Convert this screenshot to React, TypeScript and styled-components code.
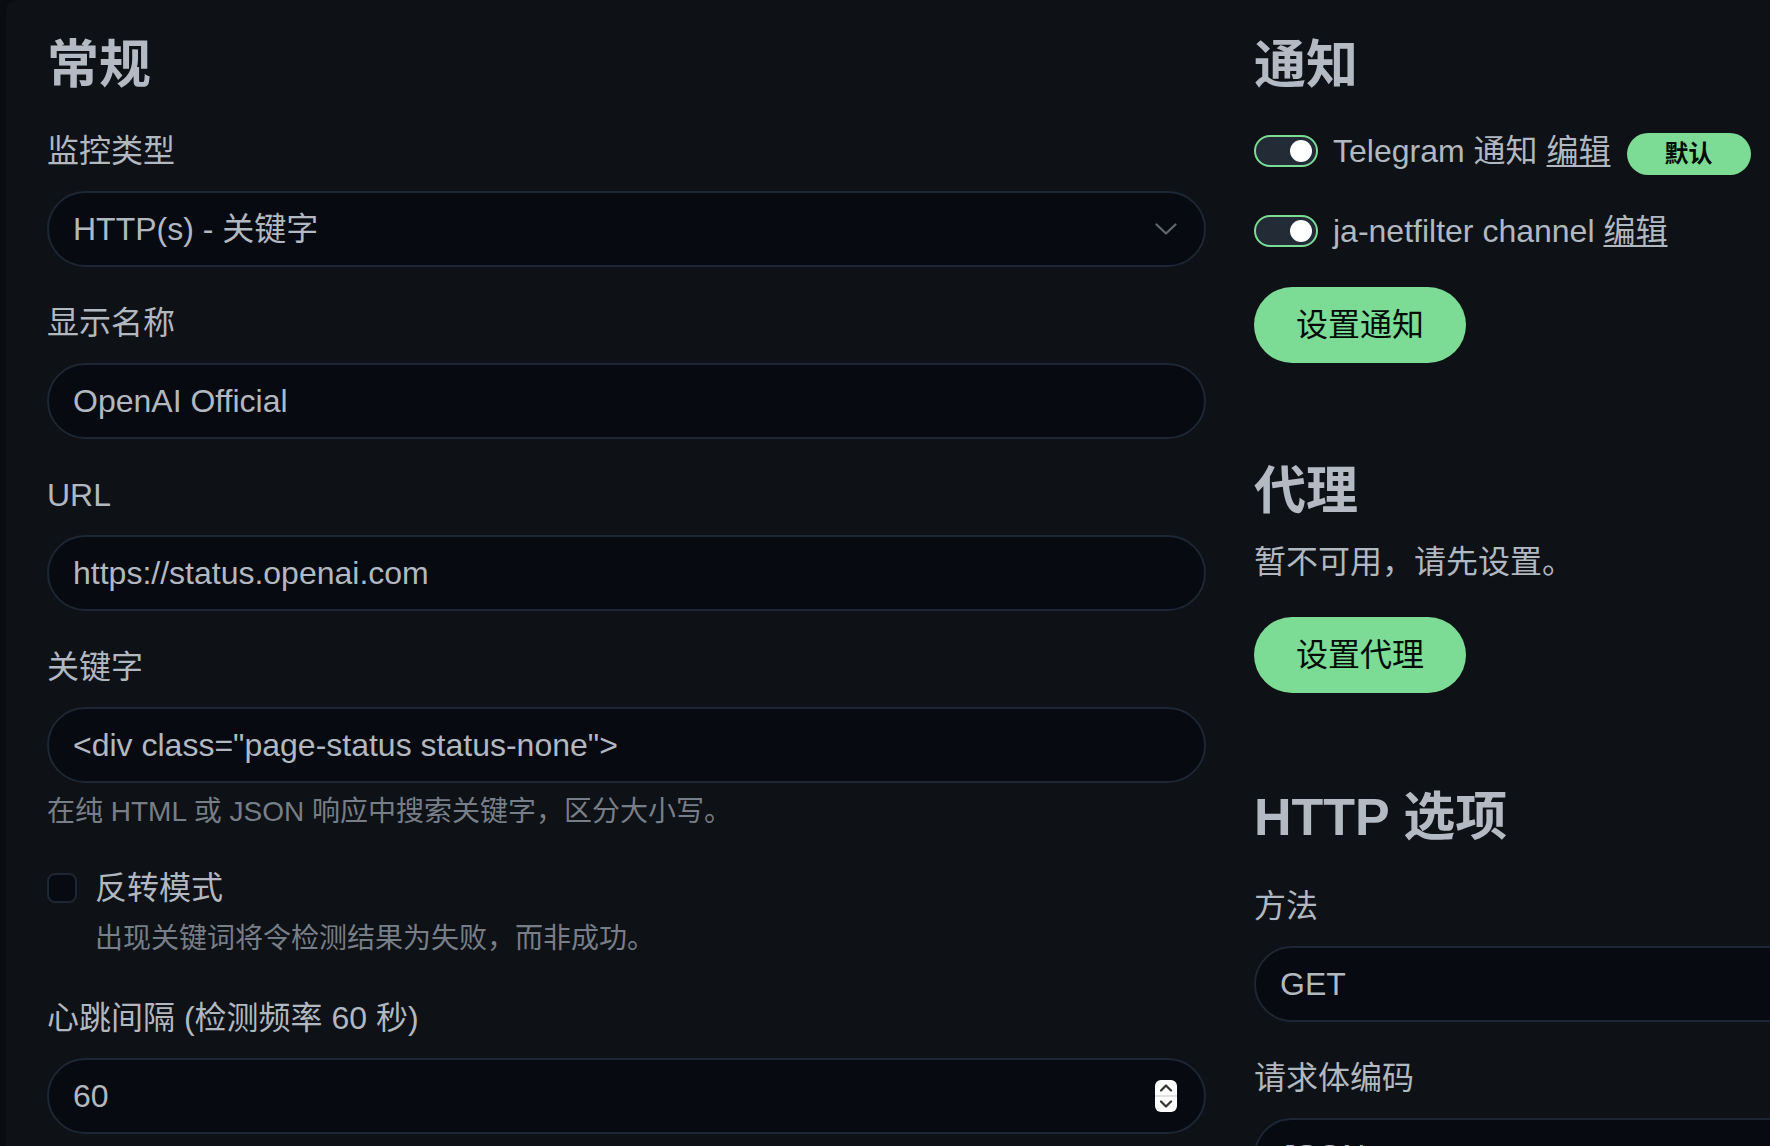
import React from "react";
import styled, { createGlobalStyle } from "styled-components";

const GlobalStyle = createGlobalStyle`
  html, body {
    margin: 0;
    padding: 0;
    background: #090c10;
    overflow: hidden;
  }
  body {
    font-family: "Liberation Sans", "Noto Sans CJK SC", sans-serif;
  }
  #root {
    width: 1770px;
    height: 1146px;
    overflow: hidden;
  }
`;

const GREEN = "#7cdb94";
const FONT = `"Liberation Sans", "Noto Sans CJK SC", sans-serif`;

const Card = styled.div`
  margin-left: 6px;
  width: 2460px;
  height: 1146px;
  box-sizing: border-box;
  padding: 35px 41px 0;
  background: #0e1116;
  border-top-left-radius: 10px;
  color: #b1b8c0;
  font-family: ${FONT};
`;

const Columns = styled.div`
  display: grid;
  grid-template-columns: 1159px 1159px;
  column-gap: 48px;
  align-items: start;
`;

const Column = styled.section`
  display: flex;
  flex-direction: column;
  align-items: stretch;
`;

const SectionTitle = styled.h2<{ $mt?: number }>`
  margin: ${(p) => p.$mt ?? 0}px 0 0;
  font-size: 52px;
  line-height: 61px;
  font-weight: 700;
  color: #b4bac3;
`;

const FieldGroup = styled.div<{ $mt?: number }>`
  margin-top: ${(p) => p.$mt ?? 32}px;
`;

const Label = styled.label`
  display: block;
  font-size: 32px;
  line-height: 48px;
  margin-bottom: 16px;
  color: #b1b8c0;
`;

const Field = styled.div`
  height: 76px;
  box-sizing: border-box;
  border: 2px solid #1d2634;
  border-radius: 38px;
  background: #070a10;
  padding: 0 27px 0 24px;
  display: flex;
  align-items: center;
  justify-content: space-between;
  font-size: 32px;
  line-height: 48px;
  color: #b1b8c0;
  white-space: nowrap;
  overflow: hidden;
`;

const FieldValue = styled.span`
  flex: 1;
  overflow: hidden;
`;

const HelpText = styled.div<{ $indent?: number; $mt?: number }>`
  margin-top: ${(p) => p.$mt ?? 8}px;
  margin-left: ${(p) => p.$indent ?? 0}px;
  font-size: 28px;
  line-height: 42px;
  color: #787e87;
`;

const CheckRow = styled.div<{ $mt?: number }>`
  margin-top: ${(p) => p.$mt ?? 31}px;
  display: flex;
  align-items: center;
  gap: 18px;
  height: 48px;
  font-size: 32px;
  line-height: 48px;
`;

const CheckBox = styled.span`
  width: 30px;
  height: 30px;
  box-sizing: border-box;
  border: 2px solid #1d2634;
  border-radius: 8px;
  background: #070a10;
  flex: none;
`;

const SwitchRow = styled.div<{ $mt?: number }>`
  margin-top: ${(p) => p.$mt ?? 32}px;
  display: flex;
  align-items: center;
  height: 48px;
  font-size: 32px;
  line-height: 48px;
  white-space: nowrap;
`;

const Toggle = styled.span`
  position: relative;
  width: 64px;
  height: 32px;
  box-sizing: border-box;
  border: 2px solid ${GREEN};
  border-radius: 16px;
  background: #232b36;
  margin-right: 15px;
  flex: none;
  &::after {
    content: "";
    position: absolute;
    right: 4px;
    top: 50%;
    width: 22px;
    height: 22px;
    margin-top: -11px;
    border-radius: 50%;
    background: #ffffff;
  }
`;

const EditLink = styled.a`
  color: #b1b8c0;
  text-decoration: underline;
  text-decoration-thickness: 2px;
  text-underline-offset: 3px;
  margin-left: 9px;
  cursor: pointer;
`;

const Badge = styled.span`
  display: inline-flex;
  align-items: center;
  height: 42px;
  margin-left: 16px;
  margin-top: 6px;
  padding: 0 38px;
  border-radius: 21px;
  background: ${GREEN};
  color: #020b05;
  font-size: 24px;
  font-weight: 700;
`;

const PrimaryButton = styled.button<{ $mt?: number }>`
  margin-top: ${(p) => p.$mt ?? 32}px;
  align-self: flex-start;
  height: 76px;
  padding: 0 42px;
  border: none;
  border-radius: 38px;
  background: ${GREEN};
  color: #020b05;
  font-family: ${FONT};
  font-size: 32px;
  line-height: 48px;
  cursor: pointer;
`;

const Note = styled.p<{ $mt?: number }>`
  margin: ${(p) => p.$mt ?? 16}px 0 0;
  font-size: 32px;
  line-height: 48px;
  color: #b1b8c0;
`;

const Chevron = () => (
  <svg width="22" height="12" viewBox="0 0 22 12" fill="none">
    <polyline
      points="1.5,1.5 11,10.5 20.5,1.5"
      stroke="#5f6772"
      strokeWidth="2.2"
      strokeLinecap="round"
      strokeLinejoin="round"
    />
  </svg>
);

const Spinner = () => (
  <svg width="22" height="32" viewBox="0 0 22 32" fill="none">
    <rect x="0" y="0" width="22" height="32" rx="6" fill="#ffffff" />
    <line x1="0" y1="16" x2="22" y2="16" stroke="#d8d8d8" strokeWidth="1.5" />
    <polyline
      points="6,10.5 11,5.5 16,10.5"
      stroke="#333333"
      strokeWidth="2.2"
      strokeLinecap="round"
      strokeLinejoin="round"
    />
    <polyline
      points="6,21.5 11,26.5 16,21.5"
      stroke="#333333"
      strokeWidth="2.2"
      strokeLinecap="round"
      strokeLinejoin="round"
    />
  </svg>
);

export default function App() {
  return (
    <>
      <GlobalStyle />
      <Card>
        <Columns>
          <Column>
            <SectionTitle>常规</SectionTitle>

            <FieldGroup $mt={31}>
              <Label>监控类型</Label>
              <Field>
                <FieldValue>HTTP(s) - 关键字</FieldValue>
                <Chevron />
              </Field>
            </FieldGroup>

            <FieldGroup>
              <Label>显示名称</Label>
              <Field>
                <FieldValue>OpenAI Official</FieldValue>
              </Field>
            </FieldGroup>

            <FieldGroup>
              <Label>URL</Label>
              <Field>
                <FieldValue>https://status.openai.com</FieldValue>
              </Field>
            </FieldGroup>

            <FieldGroup>
              <Label>关键字</Label>
              <Field>
                <FieldValue>{'<div class="page-status status-none">'}</FieldValue>
              </Field>
              <HelpText>在纯 HTML 或 JSON 响应中搜索关键字，区分大小写。</HelpText>
            </FieldGroup>

            <CheckRow>
              <CheckBox />
              <span>反转模式</span>
            </CheckRow>
            <HelpText $indent={48} $mt={6}>
              出现关键词将令检测结果为失败，而非成功。
            </HelpText>

            <FieldGroup $mt={34}>
              <Label>心跳间隔 (检测频率 60 秒)</Label>
              <Field>
                <FieldValue>60</FieldValue>
                <Spinner />
              </Field>
            </FieldGroup>
          </Column>

          <Column>
            <SectionTitle>通知</SectionTitle>

            <SwitchRow $mt={31}>
              <Toggle />
              <span>Telegram 通知</span>
              <EditLink>编辑</EditLink>
              <Badge>默认</Badge>
            </SwitchRow>

            <SwitchRow>
              <Toggle />
              <span>ja-netfilter channel</span>
              <EditLink>编辑</EditLink>
            </SwitchRow>

            <PrimaryButton>设置通知</PrimaryButton>

            <SectionTitle $mt={98}>代理</SectionTitle>
            <Note>暂不可用，请先设置。</Note>
            <PrimaryButton $mt={31}>设置代理</PrimaryButton>

            <SectionTitle $mt={94}>HTTP 选项</SectionTitle>

            <FieldGroup $mt={34}>
              <Label>方法</Label>
              <Field>
                <FieldValue>GET</FieldValue>
              </Field>
            </FieldGroup>

            <FieldGroup>
              <Label>请求体编码</Label>
              <Field>
                <FieldValue>JSON</FieldValue>
              </Field>
            </FieldGroup>
          </Column>
        </Columns>
      </Card>
    </>
  );
}
